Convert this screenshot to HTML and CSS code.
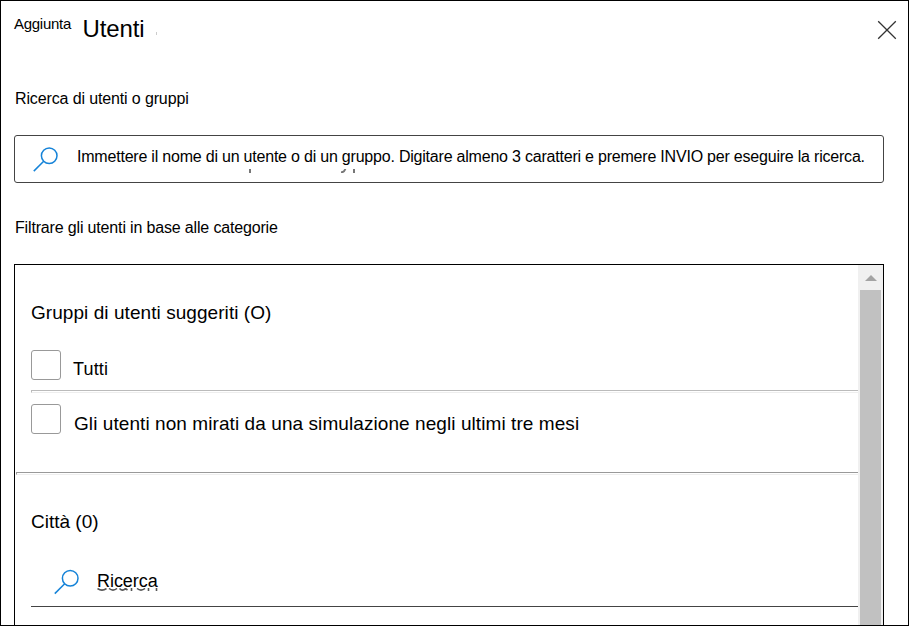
FILE: index.html
```html
<!DOCTYPE html>
<html lang="it">
<head>
<meta charset="utf-8">
<title>Utenti</title>
<link rel="stylesheet" href="styles.css">
</head>
<body>
<main class="panel">
  <header class="header">
    <span class="eyebrow">Aggiunta</span>
    <h1 class="title">Utenti</h1>
    <i class="speck"></i>
    <svg class="close" width="20" height="20" viewBox="0 0 20 20" fill="none" stroke="#333" stroke-width="1.3"><path d="M1.2 1.2 18.8 18.8M18.8 1.2 1.2 18.8"/></svg>
  </header>
  <p class="label label-search">Ricerca di utenti o gruppi</p>
  <div class="search">
    <svg class="glass" width="26" height="26" viewBox="0 0 26 26" fill="none" stroke="#1583d8" stroke-width="1.5"><circle cx="16.2" cy="8.7" r="7.8"/><path d="M10.7 14.2.8 24.1"/></svg>
    <span class="search-text">Immettere il nome di un utente o di un gruppo. Digitare almeno 3 caratteri e premere INVIO per eseguire la ricerca.</span>
    <svg class="search-marks" width="110" height="4" viewBox="0 0 110 4" fill="none" stroke="#777" stroke-width="2"><path d="M2 0v4M93 3.200q3 .3 4.400-3.200M106 0v4"/></svg>
  </div>
  <p class="label label-filter">Filtrare gli utenti in base alle categorie</p>
  <section class="list">
    <div class="content">
      <h2 class="group">Gruppi di utenti suggeriti (O)</h2>
      <div class="option"><span class="box"></span><span class="option-text short">Tutti</span></div>
      <div class="rule"></div>
      <div class="option second"><span class="box"></span><span class="option-text">Gli utenti non mirati da una simulazione negli ultimi tre mesi</span></div>
      <div class="rule wide"></div>
      <h2 class="group city">Città (0)</h2>
      <div class="find">
        <svg class="glass" width="26" height="26" viewBox="0 0 26 26" fill="none" stroke="#1583d8" stroke-width="1.5"><circle cx="16.2" cy="9.2" r="7.8"/><path d="M10.7 14.7.8 24.6"/></svg>
        <span class="find-text">Ricerca</span>
        <svg class="find-marks" width="62" height="3" viewBox="0 0 62 3" fill="none" stroke="#555" stroke-width="1.6"><path d="M.5.5q4.500 3.200 9 0M12 .5q4 3.200 8 0M22.500.5q3 3.200 6 0l2 1.500M34.500 0v3M40 .5q4 3.200 8 0M51.500 0v3M59.500 0v3"/></svg>
      </div>
    </div>
    <div class="scrollbar">
      <svg class="arrow" width="12" height="6" viewBox="0 0 12 6"><path d="M6 0 12 6H0z" fill="#a3a3a3"/></svg>
      <div class="thumb"></div>
    </div>
  </section>
</main>
</body>
</html>
```

FILE: styles.css
```css
* { box-sizing: border-box; }
body { margin: 0; background: #fff; color: #000; font-family: "Liberation Sans", Arial, sans-serif; }
h1, h2, p { margin: 0; font-weight: 400; }
svg { display: block; flex: none; }
.panel { width: 909px; height: 626px; border: 1px solid #000; padding: 0 24px 0 13px; overflow: hidden; display: flex; flex-direction: column; }
.header { height: 88px; flex: none; display: flex; align-items: flex-start; margin-right: -13px; }
.eyebrow { font-size: 15px; line-height: 18px; letter-spacing: -.28px; margin-top: 14px; width: 68.5px; }
.title { font-size: 24px; line-height: 28px; letter-spacing: -.1px; margin-top: 14px; }
.speck { width: 1px; height: 3px; background: #ccc; margin: 31px 0 0 11px; }
.close { margin: 19px 0 0 auto; }
.label { font-size: 16px; line-height: 20px; flex: none; white-space: nowrap; padding-left: 1px; }
.label-search { letter-spacing: -.13px; margin-bottom: 26px; }
.label-filter { letter-spacing: -.16px; margin: 35px 0 26px; }
.search { position: relative; height: 48px; flex: none; border: 1px solid #444; border-radius: 3px; display: flex; align-items: flex-start; padding-left: 18px; }
.search .glass { margin-top: 11px; }
.search-text { font-size: 16px; line-height: 20px; letter-spacing: -.21px; margin: 11px 0 0 18px; white-space: nowrap; }
.search-marks { position: absolute; left: 233px; top: 33px; }
.list { flex: 1; min-height: 0; border: 1px solid #000; border-bottom: 0; display: flex; overflow: hidden; }
.content { flex: 1; padding-left: 16px; }
.group { font-size: 19px; line-height: 24px; letter-spacing: .06px; margin: 36px 0 25px; }
.option { display: flex; align-items: flex-start; height: 40px; }
.box { width: 30px; height: 30px; flex: none; border: 1px solid #999; border-radius: 3px; }
.option-text { font-size: 19px; line-height: 24px; letter-spacing: .075px; margin: 8px 0 0 13px; white-space: nowrap; }
.option-text.short { font-size: 18px; letter-spacing: .15px; margin: 7px 0 0 12px; }
.rule { height: 3px; border-top: 1px solid #bbb; border-bottom: 1px solid #eee; border-left: 1px solid #bbb; }
.second { height: 79px; padding-top: 11px; }
.rule.wide { margin-left: -15px; border-top-color: #999; border-left-color: #999; }
.group.city { margin: 35px 0 0; letter-spacing: 0; }
.find { position: relative; height: 73px; border-bottom: 1px solid #444; display: flex; align-items: flex-start; padding-left: 23px; }
.find .glass { margin-top: 35px; }
.find-text { font-size: 18px; line-height: 24px; letter-spacing: -.05px; margin: 35px 0 0 17px; }
.find-marks { position: absolute; left: 66px; top: 54px; }
.scrollbar { width: 25px; background: #f0f0f0; display: flex; flex-direction: column; padding: 10px 2px 0; }
.arrow { margin: 0 0 9px 5px; }
.thumb { flex: 1; background: #c1c1c1; }
```
